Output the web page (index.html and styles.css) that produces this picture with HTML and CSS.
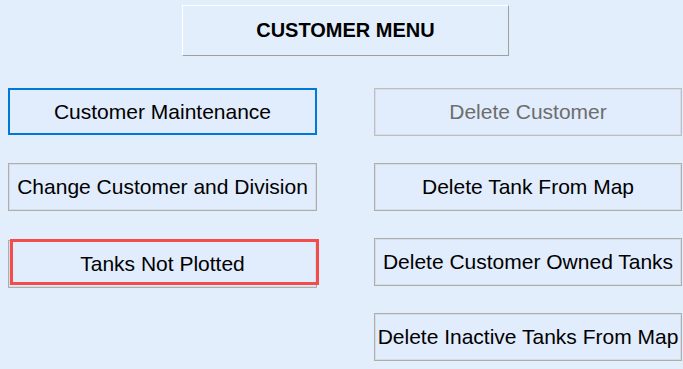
FILE: index.html
```html
<!DOCTYPE html>
<html lang="en">
<head>
  <meta charset="UTF-8">
  <title>Customer Menu</title>
  <link rel="stylesheet" href="styles.css">
</head>
<body>
  <div class="menu">
    <div class="title">CUSTOMER MENU</div>
    <div class="buttons">
      <button class="btn focused left r1">Customer Maintenance</button>
      <button class="btn right r1" disabled>Delete Customer</button>
      <button class="btn left r2">Change Customer and Division</button>
      <button class="btn right r2">Delete Tank From Map</button>
      <button class="btn left r3 marked">Tanks Not Plotted</button>
      <button class="btn right r3">Delete Customer Owned Tanks</button>
      <button class="btn right r4">Delete Inactive Tanks From Map</button>
    </div>
  </div>
</body>
</html>
```

FILE: styles.css
```css
html, body {
  margin: 0;
  background: #e3eefd;
}
body {
  font-family: "Liberation Sans", Arial, sans-serif;
  width: 683px;
  height: 369px;
  overflow: hidden;
}
.menu { padding-top: 5px; }
.title {
  margin-left: 182px;
  width: 325px;
  height: 49px;
  line-height: 49px;
  text-align: center;
  font-weight: bold;
  font-size: 20px;
  color: #000;
  background: #e3eefd;
  border-top: 1px solid #fff;
  border-left: 1px solid #fff;
  border-right: 1px solid #a0a0a0;
  border-bottom: 1px solid #a0a0a0;
}
.buttons {
  display: grid;
  grid-template-columns: 309px 308px;
  grid-template-rows: repeat(4, 48px);
  column-gap: 57px;
  row-gap: 27px;
  margin: 32px 0 0 8px;
}
.left { grid-column: 1; }
.right { grid-column: 2; }
.r1 { grid-row: 1; }
.r2 { grid-row: 2; }
.r3 { grid-row: 3; }
.r4 { grid-row: 4; }
.btn {
  position: relative;
  margin: 0;
  padding: 0;
  font-family: inherit;
  font-size: 21px;
  color: #000;
  background: #e1ecfc;
  border: 1px solid #adadad;
  box-shadow: inset 0 0 0 1px #d6dde6;
  text-align: center;
  white-space: nowrap;
}
.btn:disabled {
  color: #6d6d6d;
  border-color: #bfbfbf;
}
.btn.focused {
  border: 2px solid #0078d7;
  box-shadow: none;
  height: 47px;
}
.left.r3 {
  align-self: start;
  margin-top: 2px;
  height: 48px;
}
.btn.marked::after {
  content: "";
  position: absolute;
  left: 1px;
  top: -2px;
  right: -3px;
  bottom: 2px;
  border: 3px solid #f44b4b;
}
```
